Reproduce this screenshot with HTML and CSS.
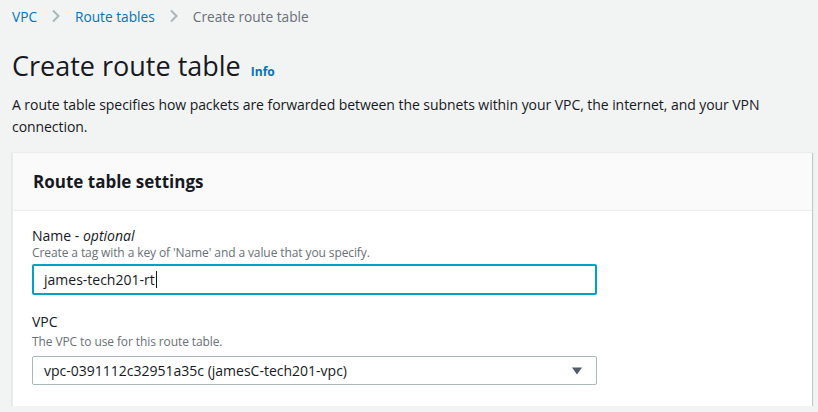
FILE: index.html
```html
<!DOCTYPE html>
<html>
<head>
<meta charset="utf-8">
<link rel="stylesheet" href="styles.css">
</head>
<body>
<div class="page">
  <nav class="crumbs">
    <a class="crumb-link">VPC</a>
    <svg class="chev" width="10" height="14" viewBox="0 0 10 14"><path d="M2 1.5 L7.5 7 L2 12.5" fill="none" stroke="#aab7b8" stroke-width="2"/></svg>
    <a class="crumb-link">Route tables</a>
    <svg class="chev" width="10" height="14" viewBox="0 0 10 14"><path d="M2 1.5 L7.5 7 L2 12.5" fill="none" stroke="#aab7b8" stroke-width="2"/></svg>
    <span class="crumb-current">Create route table</span>
  </nav>
  <div class="title-row">
    <h1 class="title">Create route table</h1>
    <a class="info">Info</a>
  </div>
  <p class="desc">A route table specifies how packets are forwarded between the subnets within your VPC, the internet, and your VPN connection.</p>
  <section class="panel">
    <header class="panel-head">Route table settings</header>
    <div class="panel-body">
      <div class="field">
        <div class="label">Name - <i>optional</i></div>
        <div class="hint">Create a tag with a key of 'Name' and a value that you specify.</div>
        <div class="input focused"><span>james-tech201-rt</span><span class="caret"></span></div>
      </div>
      <div class="field vpc">
        <div class="label">VPC</div>
        <div class="hint">The VPC to use for this route table.</div>
        <div class="input select"><span>vpc-0391112c32951a35c (jamesC-tech201-vpc)</span>
          <svg class="arrow" width="12" height="10" viewBox="0 0 12 10"><path d="M1 1.5 H11 L6 8.5 Z" fill="#545b64"/></svg>
        </div>
      </div>
    </div>
  </section>
</div>
</body>
</html>
```
FILE: styles.css
```css
html, body {
  margin: 0;
  padding: 0;
  background: #f2f3f3;
  font-family: "Open Sans", "Noto Sans", sans-serif;
  color: #16191f;
}
.page {
  padding: 6px 0 0 12px;
  width: 800px;
}
.crumbs {
  display: flex;
  align-items: center;
  height: 20px;
  font-size: 13.7px;
  gap: 14px;
}
.crumb-link { color: #0073bb; }
.crumb-current { color: #687078; }
.chev { display: block; }
.title-row {
  display: flex;
  align-items: baseline;
  margin-top: 22px;
  gap: 10px;
}
.title {
  margin: 0;
  font-size: 27px;
  font-weight: 400;
  line-height: 36px;
}
.info {
  color: #0073bb;
  font-size: 12px;
  font-weight: 700;
}
.desc {
  margin: 10px 0 0 0;
  font-size: 14px;
  letter-spacing: -0.06px;
  line-height: 22px;
}
.panel {
  margin-top: 14px;
  background: #fff;
  border-left: 1px solid #eaeded;
  border-top: 1px solid #eaeded;
  box-shadow: 0 1px 1px 0 rgba(0,28,36,0.3), 1px 1px 1px 0 rgba(0,28,36,0.15);
}
.panel-head {
  background: #fafafa;
  height: 57px;
  line-height: 57px;
  border-bottom: 1px solid #eaeded;
  padding-left: 20px;
  font-size: 17px;
  font-weight: 700;
}
.panel-body {
  padding: 16px 215px 21px 19px;
  display: flex;
  flex-direction: column;
  gap: 18px;
}
.label {
  font-size: 14px;
  line-height: 18px;
}
.hint {
  font-size: 12px;
  line-height: 16px;
  color: #687078;
  letter-spacing: -0.1px;
}
.vpc .hint { margin-top: 3px; }
.input {
  margin-top: 3px;
  height: 27px;
  border: 1px solid #aab7b8;
  border-radius: 2px;
  display: flex;
  align-items: center;
  padding: 0 11px;
  font-size: 14px;
  background: #fff;
}
.vpc .input { margin-top: 6px; }
.input.focused {
  height: 27px;
  border: 2px solid #00a1c9;
  padding: 0 10px;
}
.caret {
  display: inline-block;
  width: 1px;
  height: 17px;
  background: #16191f;
  margin-left: 1px;
}
.select {
  justify-content: space-between;
  padding-right: 13px;
}
.arrow { display: block; }
```
